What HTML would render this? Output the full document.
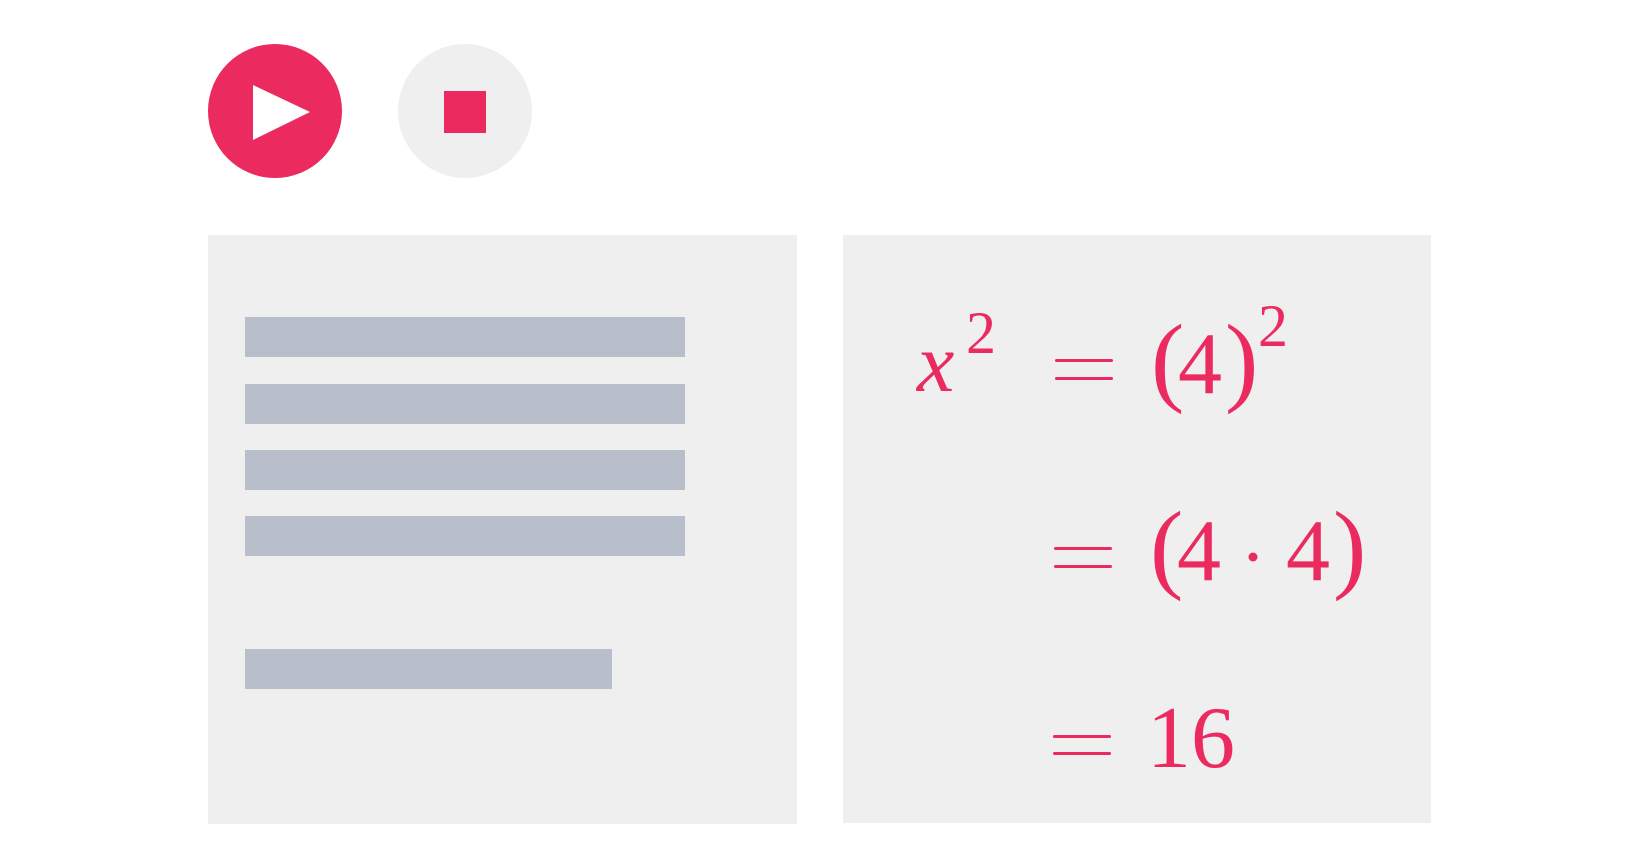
<!DOCTYPE html>
<html><head><meta charset="utf-8"><style>
html,body{margin:0;padding:0;background:#fff;width:1640px;height:868px;overflow:hidden;position:relative}
.a{position:absolute}
</style></head><body>
<div class="a" style="left:208px;top:44px;width:134px;height:134px;border-radius:50%;background:#EB2A5F"></div>
<svg class="a" style="left:0;top:0" width="1640" height="868">
<polygon points="253,85 310,112 253,140" fill="#fff"/>
</svg>
<div class="a" style="left:398px;top:44px;width:134px;height:134px;border-radius:50%;background:#efefef"></div>
<div class="a" style="left:444px;top:91px;width:42px;height:42px;background:#EB2A5F"></div>

<div class="a" style="left:208px;top:235px;width:589px;height:589px;background:#efefef"></div>
<div class="a" style="left:245px;top:317px;width:440px;height:40px;background:#b8beca"></div>
<div class="a" style="left:245px;top:384px;width:440px;height:40px;background:#b8beca"></div>
<div class="a" style="left:245px;top:450px;width:440px;height:40px;background:#b8beca"></div>
<div class="a" style="left:245px;top:516px;width:440px;height:40px;background:#b8beca"></div>
<div class="a" style="left:245px;top:649px;width:367px;height:40px;background:#b8beca"></div>

<div class="a" style="left:843px;top:235px;width:588px;height:588px;background:#efefef"></div>

<svg class="a" style="left:0;top:0" width="1640" height="868" font-family="Liberation Serif, serif" fill="#EB2A5F">
<text x="917" y="391" font-size="84" font-style="italic">x</text>
<text x="966" y="353" font-size="60">2</text>
<rect x="1055" y="359" width="58" height="3" rx="1.5"/>
<rect x="1055" y="377" width="58" height="3" rx="1.5"/>
<text x="1151" y="393" font-size="100">(</text>
<text x="1178" y="393" font-size="88">4</text>
<text x="1225" y="393" font-size="100">)</text>
<text x="1258" y="346" font-size="60">2</text>

<rect x="1054" y="547" width="58" height="3" rx="1.5"/>
<rect x="1054" y="565" width="58" height="3" rx="1.5"/>
<text x="1150" y="580" font-size="100">(</text>
<text x="1177" y="580" font-size="88">4</text>
<circle cx="1253" cy="557" r="4.5"/>
<text x="1286" y="580" font-size="88">4</text>
<text x="1333" y="580" font-size="100">)</text>

<rect x="1053" y="735" width="58" height="3" rx="1.5"/>
<rect x="1053" y="752" width="58" height="3" rx="1.5"/>
<text x="1147" y="767" font-size="88">16</text>
</svg>
</body></html>
